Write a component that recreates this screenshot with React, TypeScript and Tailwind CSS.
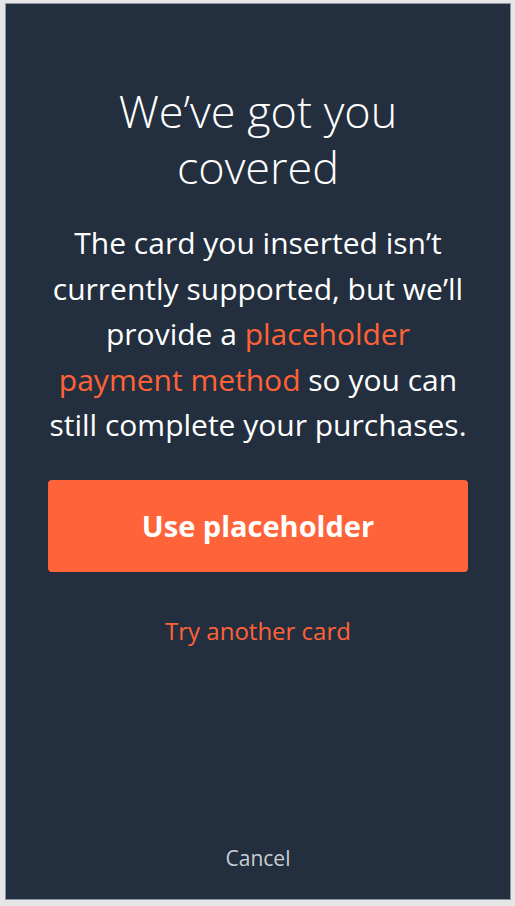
import React from "react";

export default function App() {
  return (
    <div className="w-[515px] h-[906px] bg-[#e6e6e6] pt-[3px] pl-[5px]" style={{ fontFamily: '"Open Sans", "Noto Sans", sans-serif' }}>
      <div className="w-[506px] h-[897px] bg-[#232f3e] border border-[#8d96a2] flex flex-col items-center">
        <h1 className="mt-[79px] text-[45px] leading-[56px] font-light text-white text-center">
          We’ve got you
          <br />
          covered
        </h1>
        <p className="mt-[25px] text-[30px] leading-[45.5px] text-white text-center">
          The card you inserted isn’t
          <br />
          currently supported, but we’ll
          <br />
          provide a <span className="text-[#ff6236]">placeholder</span>
          <br />
          <span className="text-[#ff6236]">payment method</span> so you can
          <br />
          still complete your purchases.
        </p>
        <button className="mt-[32px] w-[420px] h-[92px] rounded-[4px] bg-[#ff6339] text-white text-[29px] font-bold">
          Use placeholder
        </button>
        <button className="mt-[39px] text-[24px] leading-[40px] text-[#ff6236]">Try another card</button>
        <div className="flex-1" />
        <button className="mb-[21px] text-[21px] leading-[40px] text-[#c9ced4]">Cancel</button>
      </div>
    </div>
  );
}
